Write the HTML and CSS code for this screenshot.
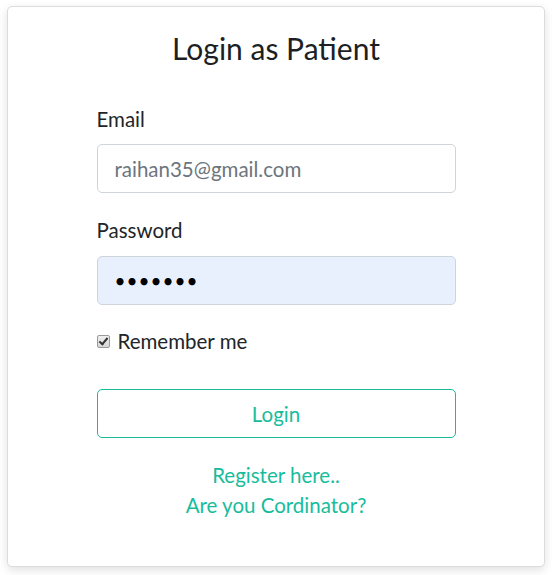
FILE: index.html
```html
<!DOCTYPE html>
<html>
<head>
<meta charset="utf-8">
<link rel="stylesheet" href="styles.css">
</head>
<body>
<div class="card">
  <h3 class="title">Login as Patient</h3>
  <form class="form">
    <label class="label" for="email">Email</label>
    <input class="input" id="email" type="text" value="raihan35@gmail.com">
    <label class="label label-pw" for="pw">Password</label>
    <input class="input input-pw" id="pw" type="password" value="abcdefg">
    <div class="check-row">
      <input class="check" type="checkbox" checked id="rem">
      <label class="check-label" for="rem">Remember me</label>
    </div>
    <button type="button" class="btn">Login</button>
    <div class="links">
      <a class="link" href="#">Register here..</a>
      <a class="link" href="#">Are you Cordinator?</a>
    </div>
  </form>
</div>
</body>
</html>
```
FILE: styles.css
```css
html, body {
  margin: 0;
  padding: 0;
  background: #ffffff;
}
body {
  padding: 6px 9px 8px 7px;
  font-family: Lato, "Open Sans", sans-serif;
  color: #212529;
  font-size: 20.5px;
  line-height: 28px;
}
.card {
  box-sizing: border-box;
  width: 538px;
  height: 561px;
  border: 1px solid #dcdcdc;
  border-radius: 5px;
  background: #fff;
  box-shadow: 0 3px 10px rgba(0,0,0,0.12);
  padding-top: 21px;
}
.title {
  margin: 0;
  text-align: center;
  font-weight: 400;
  font-size: 30px;
  line-height: 40px;
  color: #1c1f24;
}
.form {
  width: 359px;
  margin: 37px auto 0;
  display: flex;
  flex-direction: column;
}
.label {
  display: block;
  height: 28px;
}
.input {
  box-sizing: border-box;
  margin-top: 11px;
  width: 359px;
  height: 49px;
  border: 1px solid #ced4da;
  border-radius: 5px;
  padding: 0 17px;
  font-family: Lato, sans-serif;
  font-size: 20.5px;
  color: #6c757d;
  background: #fff;
  outline: none;
}
.label-pw {
  margin-top: 23px;
}
.input-pw {
  margin-top: 12px;
  background: #e8f0fe;
  color: #000;
  font-size: 19px;
  letter-spacing: 1px;
}
.check-row {
  margin-top: 22px;
  display: flex;
  align-items: center;
  height: 28px;
}
.check {
  appearance: none;
  -webkit-appearance: none;
  margin: 0 8px 0 0;
  width: 13px;
  height: 13px;
  border: 1px solid #9a9a9a;
  border-radius: 2px;
  background: linear-gradient(#f0f0f0, #d6d6d6);
  position: relative;
}
.check::after {
  content: "";
  position: absolute;
  left: 3px;
  top: 0px;
  width: 3px;
  height: 7px;
  border: solid #333;
  border-width: 0 2px 2px 0;
  transform: rotate(40deg);
}
.check-label {
  color: #212529;
}
.btn {
  margin-top: 34px;
  box-sizing: border-box;
  width: 359px;
  height: 49px;
  border: 1px solid #18bc9c;
  border-radius: 5px;
  background: #fff;
  color: #18bc9c;
  font-family: Lato, sans-serif;
  font-size: 20.5px;
}
.links {
  margin-top: 22px;
  display: flex;
  flex-direction: column;
  align-items: center;
  line-height: 30px;
}
.link {
  color: #18bc9c;
  text-decoration: none;
}
```
